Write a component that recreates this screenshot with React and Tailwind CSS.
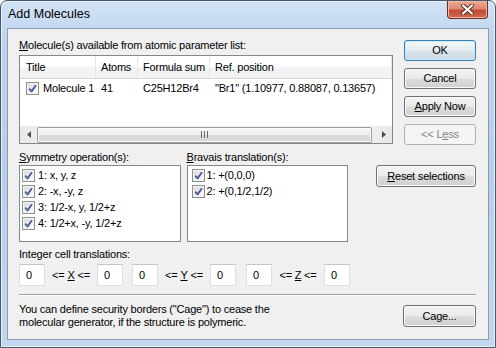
import React from 'react';

const Check = () => (
  <span className="flex h-[13px] w-[13px] shrink-0 items-center justify-center border border-[#8e8f8f] bg-[linear-gradient(135deg,#d6d6d6,#ffffff)] shadow-[inset_0_0_0_1px_#f4f4f4]">
    <svg width="9" height="9" viewBox="0 0 9 9">
      <path d="M1.2 4.6 L3.6 7.4 L7.9 1.2" stroke="#4a5f97" strokeWidth="1.9" fill="none" strokeLinejoin="round" />
    </svg>
  </span>
);

const Btn = ({ children, className = '', isDefault, disabled }) => {
  let tone = 'border-[#707070] bg-[linear-gradient(#f3f3f3_0%,#ebebeb_48%,#dddddd_52%,#cfcfcf_100%)] shadow-[inset_0_0_0_1px_#fbfbfb]';
  if (isDefault) tone = 'border-[#3c7fb1] bg-[linear-gradient(#f3f6f8_0%,#e9eef2_48%,#d9e2e9_52%,#cddae3_100%)] shadow-[inset_0_0_0_1px_#c9eafb]';
  if (disabled) tone = 'border-[#adb2b5] bg-[#f4f4f4] text-[#838383]';
  return (
    <div className={`flex h-[21px] items-center justify-center rounded-[3px] border ${tone} ${className}`}>
      {children}
    </div>
  );
};

const Field = ({ value = '0' }) => (
  <div className="flex h-[22px] w-[26px] items-center border border-[#dcdfe3] border-t-[#c2c5ca] bg-white pl-[6px]">{value}</div>
);

const Between = ({ axis }) => (
  <div className="flex w-[52px] items-center justify-center">
    &lt;=&nbsp;<span className="underline">{axis}</span>&nbsp;&lt;=
  </div>
);

const Arrow = ({ dir }) => (
  <div className="flex h-[17px] w-[17px] items-center justify-center">
    <svg width="4" height="7" viewBox="0 0 4 7">
      <path d={dir === 'left' ? 'M4 0 L0 3.5 L4 7 Z' : 'M0 0 L4 3.5 L0 7 Z'} fill="#4d4d4d" />
    </svg>
  </div>
);

const symOps = ['1: x, y, z', '2: -x, -y, z', '3: 1/2-x, y, 1/2+z', '4: 1/2+x, -y, 1/2+z'];
const bravais = ['1: +(0,0,0)', '2: +(0,1/2,1/2)'];

export default function App() {
  return (
    <div className="relative h-[348px] w-[496px] overflow-hidden rounded-t-[7px] border border-[#4b5868] bg-[linear-gradient(#d2e3f5_0%,#bcd4ee_12%,#b6cfeb_50%,#c2d8f0_100%)] font-['Liberation_Sans',Arial,sans-serif] text-[11px] tracking-[-0.2px] text-black shadow-[inset_0_0_0_1px_#e6eef8]">
      <div className="flex h-[27px] items-center pl-[7px] text-[12.5px] tracking-normal text-black">Add Molecules</div>

      <div className="absolute right-[7px] top-0 flex h-[18px] w-[41px] items-center justify-center rounded-b-[4px] border border-t-0 border-[#6b2a20] bg-[linear-gradient(#e9a995_0%,#dc8a73_45%,#c64a33_55%,#d06a4e_100%)] shadow-[inset_0_0_0_1px_#f0b9a9]">
        <svg width="15" height="11" viewBox="0 0 15 11">
          <path d="M3 1.5 L12 9.5 M12 1.5 L3 9.5" stroke="#5a2a22" strokeWidth="4" strokeLinecap="round" />
          <path d="M3 1.5 L12 9.5 M12 1.5 L3 9.5" stroke="#ffffff" strokeWidth="2.2" strokeLinecap="round" />
        </svg>
      </div>

      <div className="ml-[6px] h-[312px] w-[482px] border border-[#8a9cb2] bg-[#f0f0f0] pl-[11px] pr-[12px] pt-[9px]">
        {/* list + buttons */}
        <div className="flex gap-[11px]">
          <div className="w-[374px]">
            <div className="mb-[2px] h-[15px] leading-[15px]"><span className="underline">M</span>olecule(s) available from atomic parameter list:</div>
            <div className="flex h-[89px] flex-col border border-[#828790] bg-white">
              <div className="flex h-[23px] border-b border-[#d5d5d5] bg-[linear-gradient(#ffffff_0%,#ffffff_50%,#f3f4f6_52%,#f1f2f4_100%)]">
                <div className="flex w-[76px] items-center border-r border-[#e3e8ee] pl-[6px]">Title</div>
                <div className="flex w-[42px] items-center border-r border-[#e3e8ee] pl-[5px]">Atoms</div>
                <div className="flex w-[72px] items-center border-r border-[#e3e8ee] pl-[5px]">Formula sum</div>
                <div className="flex w-[182px] items-center border-r border-[#e3e8ee] pl-[5px]">Ref. position</div>
              </div>
              <div className="mt-[1px] flex h-[17px] items-center">
                <div className="flex w-[76px] items-center gap-[4px] pl-[6px]"><Check />Molecule 1</div>
                <div className="w-[42px] pl-[5px]">41</div>
                <div className="w-[72px] pl-[5px]">C25H12Br4</div>
                <div className="pl-[5px] whitespace-nowrap">"Br1" (1.10977, 0.88087, 0.13657)</div>
              </div>
              <div className="flex-1" />
              <div className="flex h-[17px] items-center bg-[linear-gradient(90deg,#e8e8e8,#f3f3f3_10%,#f3f3f3_90%,#e8e8e8)]">
                <Arrow dir="left" />
                <div className="flex h-[16px] flex-1 items-center justify-center rounded-[2px] border border-[#9c9c9c] bg-[linear-gradient(#f7f7f7_0%,#ececec_50%,#dcdcdc_52%,#d6d6d6_100%)] shadow-[inset_0_0_0_1px_#fcfcfc]">
                  <div className="flex gap-[2px]">
                    <span className="h-[7px] w-px bg-[#666]" />
                    <span className="h-[7px] w-px bg-[#666]" />
                    <span className="h-[7px] w-px bg-[#666]" />
                  </div>
                </div>
                <div className="w-[3px]" />
                <Arrow dir="right" />
              </div>
            </div>
          </div>
          <div className="flex w-[73px] flex-col gap-[7px] pt-[2px]">
            <Btn isDefault>OK</Btn>
            <Btn>Cancel</Btn>
            <Btn><span className="underline">A</span>pply Now</Btn>
            <Btn disabled>&lt;&lt; L<span className="underline">e</span>ss</Btn>
          </div>
        </div>

        {/* operations */}
        <div className="mt-[5px] flex">
          <div className="w-[162px]">
            <div className="h-[15px] leading-[15px]"><span className="underline">S</span>ymmetry operation(s):</div>
            <div className="flex h-[77px] flex-col border border-[#828790] bg-white pl-[2px] pt-[1px]">
              {symOps.map((op) => (
                <div key={op} className="flex h-[16px] items-center gap-[3px]"><Check />{op}</div>
              ))}
            </div>
          </div>
          <div className="ml-[6px] w-[162px]">
            <div className="h-[15px] leading-[15px]"><span className="underline">B</span>ravais translation(s):</div>
            <div className="flex h-[77px] flex-col border border-[#828790] bg-white pl-[4px] pt-[1px]">
              {bravais.map((op) => (
                <div key={op} className="flex h-[16px] items-center gap-[2px]"><Check />{op}</div>
              ))}
            </div>
          </div>
          <div className="ml-[28px] pt-[15px]">
            <Btn className="h-[22px] w-[100px]"><span className="underline">R</span>eset selections</Btn>
          </div>
        </div>

        {/* cell translations */}
        <div className="mt-[5px] h-[15px] leading-[15px]">Integer cell translations:</div>
        <div className="mt-[2px] flex">
          <Field /><Between axis="X" /><Field />
          <div className="w-[9px]" />
          <Field /><Between axis="Y" /><Field />
          <div className="w-[10px]" />
          <Field /><Between axis="Z" /><Field />
        </div>

        <div className="mt-[8px] h-[2px] border-t border-[#a0a0a0] border-b border-b-white" />

        <div className="mt-[7px] flex items-start justify-between">
          <div className="leading-[13px]">
            You can define security borders ("Cage") to cease the<br />
            molecular generator, if the structure is polymeric.
          </div>
          <Btn className="mt-[2px] h-[22px] w-[73px]">Ca<span className="underline">g</span>e...</Btn>
        </div>
      </div>
    </div>
  );
}
